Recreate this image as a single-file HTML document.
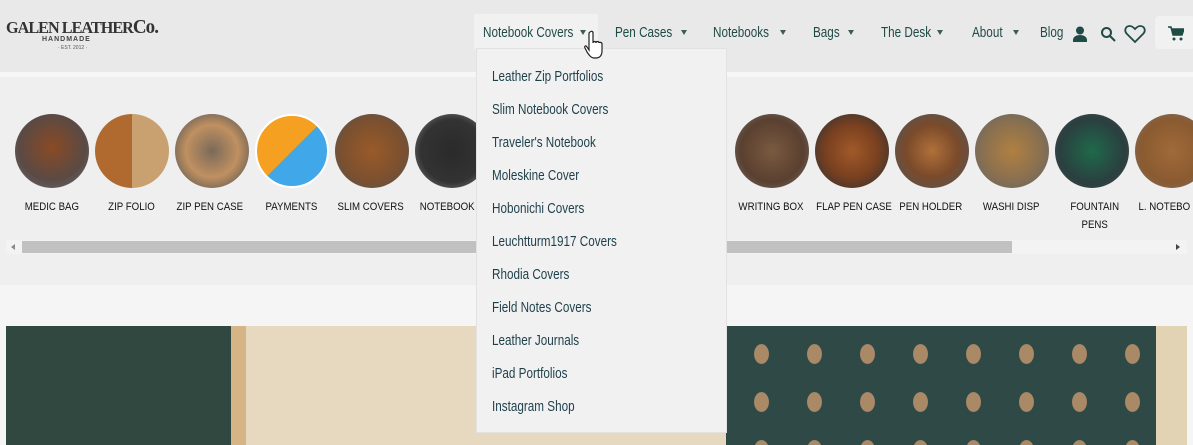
<!DOCTYPE html>
<html><head><meta charset="utf-8"><style>
*{margin:0;padding:0;box-sizing:border-box}
body{width:1193px;height:445px;overflow:hidden;background:#f5f5f5;font-family:"Liberation Sans",sans-serif;position:relative}
.hdr{position:absolute;left:0;top:0;width:1193px;height:72px;background:#e9e9e9}
.strip{position:absolute;top:72px;left:0;width:1193px;height:5px;background:#f6f6f6}
.car{position:absolute;top:77px;left:0;width:1193px;height:208px;background:#efefef}
.n{position:absolute;top:24px;font-size:15px;color:#1f4a45;display:inline-block;transform:scaleX(.78);transform-origin:left;white-space:nowrap}
.tri{position:absolute;top:30px;width:0;height:0;border-left:3px solid transparent;border-right:3px solid transparent;border-top:5px solid #3d5c58}
.c{position:absolute;top:114px;width:74px;height:74px;border-radius:50%}
.l{position:absolute;top:198px;width:80px;text-align:center;font-size:11px;color:#111;line-height:18px;white-space:nowrap}
.l span{display:inline-block;transform:scaleX(.88)}
.dd{position:absolute;left:476px;top:48px;width:251px;height:385px;background:#f1f1f1;border:1px solid #e2e2e2}
.dd div{position:absolute;left:15px;font-size:15px;color:#1d3f4a;transform:scaleX(.78);transform-origin:left;white-space:nowrap}
</style></head><body>
<div class="hdr"></div>
<div style="position:absolute;left:6px;top:16px;font-family:'Liberation Serif',serif;font-size:17px;font-weight:bold;color:#333;letter-spacing:-1px;transform:scaleX(.95);transform-origin:left">GALEN LEATHER<span style="font-size:20px">Co.</span></div>
<div style="position:absolute;left:42px;top:36px;font-size:7px;color:#444;letter-spacing:1px;font-weight:bold">HANDMADE</div>
<div style="position:absolute;left:58px;top:45px;font-size:5px;color:#555">· EST. 2012 ·</div>
<div style="position:absolute;left:474px;top:14px;width:124px;height:35px;background:#f1f1f1"></div>
<span class="n" style="left:483px">Notebook Covers</span><span class="tri" style="left:580px"></span>
<span class="n" style="left:615px">Pen Cases</span><span class="tri" style="left:681px"></span>
<span class="n" style="left:713px">Notebooks</span><span class="tri" style="left:780px"></span>
<span class="n" style="left:813px">Bags</span><span class="tri" style="left:848px"></span>
<span class="n" style="left:881px">The Desk</span><span class="tri" style="left:937px"></span>
<span class="n" style="left:972px">About</span><span class="tri" style="left:1013px"></span>
<span class="n" style="left:1040px">Blog</span>
<svg style="position:absolute;left:1072px;top:26px" width="16" height="16" viewBox="0 0 16 16"><circle cx="8" cy="4.5" r="4" fill="#1f4a45"/><path d="M1 16v-2c0-3 3-5 7-5s7 2 7 5v2z" fill="#1f4a45"/></svg>
<svg style="position:absolute;left:1100px;top:26px" width="16" height="16" viewBox="0 0 16 16"><circle cx="6.5" cy="6.5" r="4.5" fill="none" stroke="#1f4a45" stroke-width="2"/><path d="M10 10l5 5" stroke="#1f4a45" stroke-width="2"/></svg>
<svg style="position:absolute;left:1124px;top:24px" width="22" height="20" viewBox="0 0 22 20"><path d="M11 18L3 10C0 7 1 2 6 2c2 0 4 2 5 3 1-1 3-3 5-3 5 0 6 5 3 8z" fill="none" stroke="#1f4a45" stroke-width="1.8"/></svg>
<div style="position:absolute;left:1155px;top:16px;width:40px;height:33px;background:#f1f1f1;border-radius:4px"></div>
<svg style="position:absolute;left:1168px;top:26px" width="16" height="15" viewBox="0 0 16 15"><path d="M0 1h3l2 8h9l2-6H4" fill="#1f4a45" stroke="#1f4a45" stroke-width="1.5"/><circle cx="6" cy="13" r="1.5" fill="#1f4a45"/><circle cx="13" cy="13" r="1.5" fill="#1f4a45"/></svg>
<div class="strip"></div>
<div class="car"></div>
<div class="c" style="left:15px;background:radial-gradient(circle at 50% 45%,#8a4a25,#5a4a44 60%,#6a7080)"></div>
<div class="c" style="left:95px;background:linear-gradient(90deg,#b06a30 0 50%,#c9a070 50% 100%)"></div>
<div class="c" style="left:175px;background:radial-gradient(circle,#7a6a5a,#c09060 50%,#555 90%)"></div>
<div class="c" style="left:255px;background:linear-gradient(135deg,#f5a020 0 50%,#40a8e8 50%);border:2px solid #fff"></div>
<div class="c" style="left:335px;background:radial-gradient(circle,#9a5a28,#7a5030 60%,#555 90%)"></div>
<div class="c" style="left:415px;background:radial-gradient(circle,#2a2a2a,#333 60%,#777 90%)"></div>
<div class="c" style="left:735px;background:radial-gradient(circle,#7a5a40,#5a4030 60%,#777)"></div>
<div class="c" style="left:815px;background:radial-gradient(circle,#a05a28,#7a4020 50%,#333 90%)"></div>
<div class="c" style="left:895px;background:radial-gradient(circle,#b0703a,#7a4a2a 50%,#555 90%)"></div>
<div class="c" style="left:975px;background:radial-gradient(circle,#b08040,#8a7050 55%,#666 90%)"></div>
<div class="c" style="left:1055px;background:radial-gradient(circle,#1f6a4a,#2a4040 60%,#444)"></div>
<div class="c" style="left:1135px;background:radial-gradient(circle,#a06a3a,#8a5a30 60%,#777)"></div>
<div class="l" style="left:12px"><span>MEDIC BAG</span></div>
<div class="l" style="left:91px"><span>ZIP FOLIO</span></div>
<div class="l" style="left:170px"><span>ZIP PEN CASE</span></div>
<div class="l" style="left:251px"><span>PAYMENTS</span></div>
<div class="l" style="left:331px"><span>SLIM COVERS</span></div>
<div class="l" style="left:411px;text-align:left;padding-left:5px"><span>NOTEBOOK</span></div>
<div class="l" style="left:731px"><span>WRITING BOX</span></div>
<div class="l" style="left:811px"><span>FLAP PEN CASE</span></div>
<div class="l" style="left:891px"><span>PEN HOLDER</span></div>
<div class="l" style="left:971px"><span>WASHI DISP</span></div>
<div class="l" style="left:1043px;width:104px"><span>FOUNTAIN<br>PENS</span></div>
<div class="l" style="left:1132px;text-align:left;padding-left:3px"><span>L. NOTEBO</span></div>
<div style="position:absolute;left:6px;top:240px;width:1181px;height:14px;background:#f3f3f3"></div>
<div style="position:absolute;left:22px;top:241px;width:990px;height:12px;background:#c1c1c1"></div>
<div style="position:absolute;left:11px;top:244px;border-top:3px solid transparent;border-bottom:3px solid transparent;border-right:4px solid #888"></div>
<div style="position:absolute;left:1176px;top:244px;border-top:3px solid transparent;border-bottom:3px solid transparent;border-left:4px solid #444"></div>
<div style="position:absolute;left:6px;top:326px;width:1181px;height:119px;background:linear-gradient(90deg,#30483f 0 225px,#d5b586 225px 240px,#e6d9c0 240px 720px,#2f4946 720px 1150px,#e2d3b4 1150px)"></div>
<div style="position:absolute;left:735px;top:330px;width:410px;height:115px;background:radial-gradient(ellipse 12px 16px,#b8906a 60%,transparent 64%) 0 0/53px 48px;opacity:.9"></div>
<div class="dd">
<div style="top:19px">Leather Zip Portfolios</div>
<div style="top:52px">Slim Notebook Covers</div>
<div style="top:85px">Traveler's Notebook</div>
<div style="top:118px">Moleskine Cover</div>
<div style="top:151px">Hobonichi Covers</div>
<div style="top:184px">Leuchtturm1917 Covers</div>
<div style="top:217px">Rhodia Covers</div>
<div style="top:250px">Field Notes Covers</div>
<div style="top:283px">Leather Journals</div>
<div style="top:316px">iPad Portfolios</div>
<div style="top:349px">Instagram Shop</div>
</div>
<svg style="position:absolute;left:584px;top:30px" width="22" height="30" viewBox="0 0 22 30"><path d="M6 2c1-1 3-1 3 1v10c0-2 3-2 3 0 0-2 3-2 3 0 0-1 3-1 3 1v7c0 4-2 7-6 7h-2c-3 0-5-3-7-6l-2-4c-1-2 1-3 2-1l2 3V3z" fill="#fff" stroke="#222" stroke-width="1.2"/></svg>
</body></html>
